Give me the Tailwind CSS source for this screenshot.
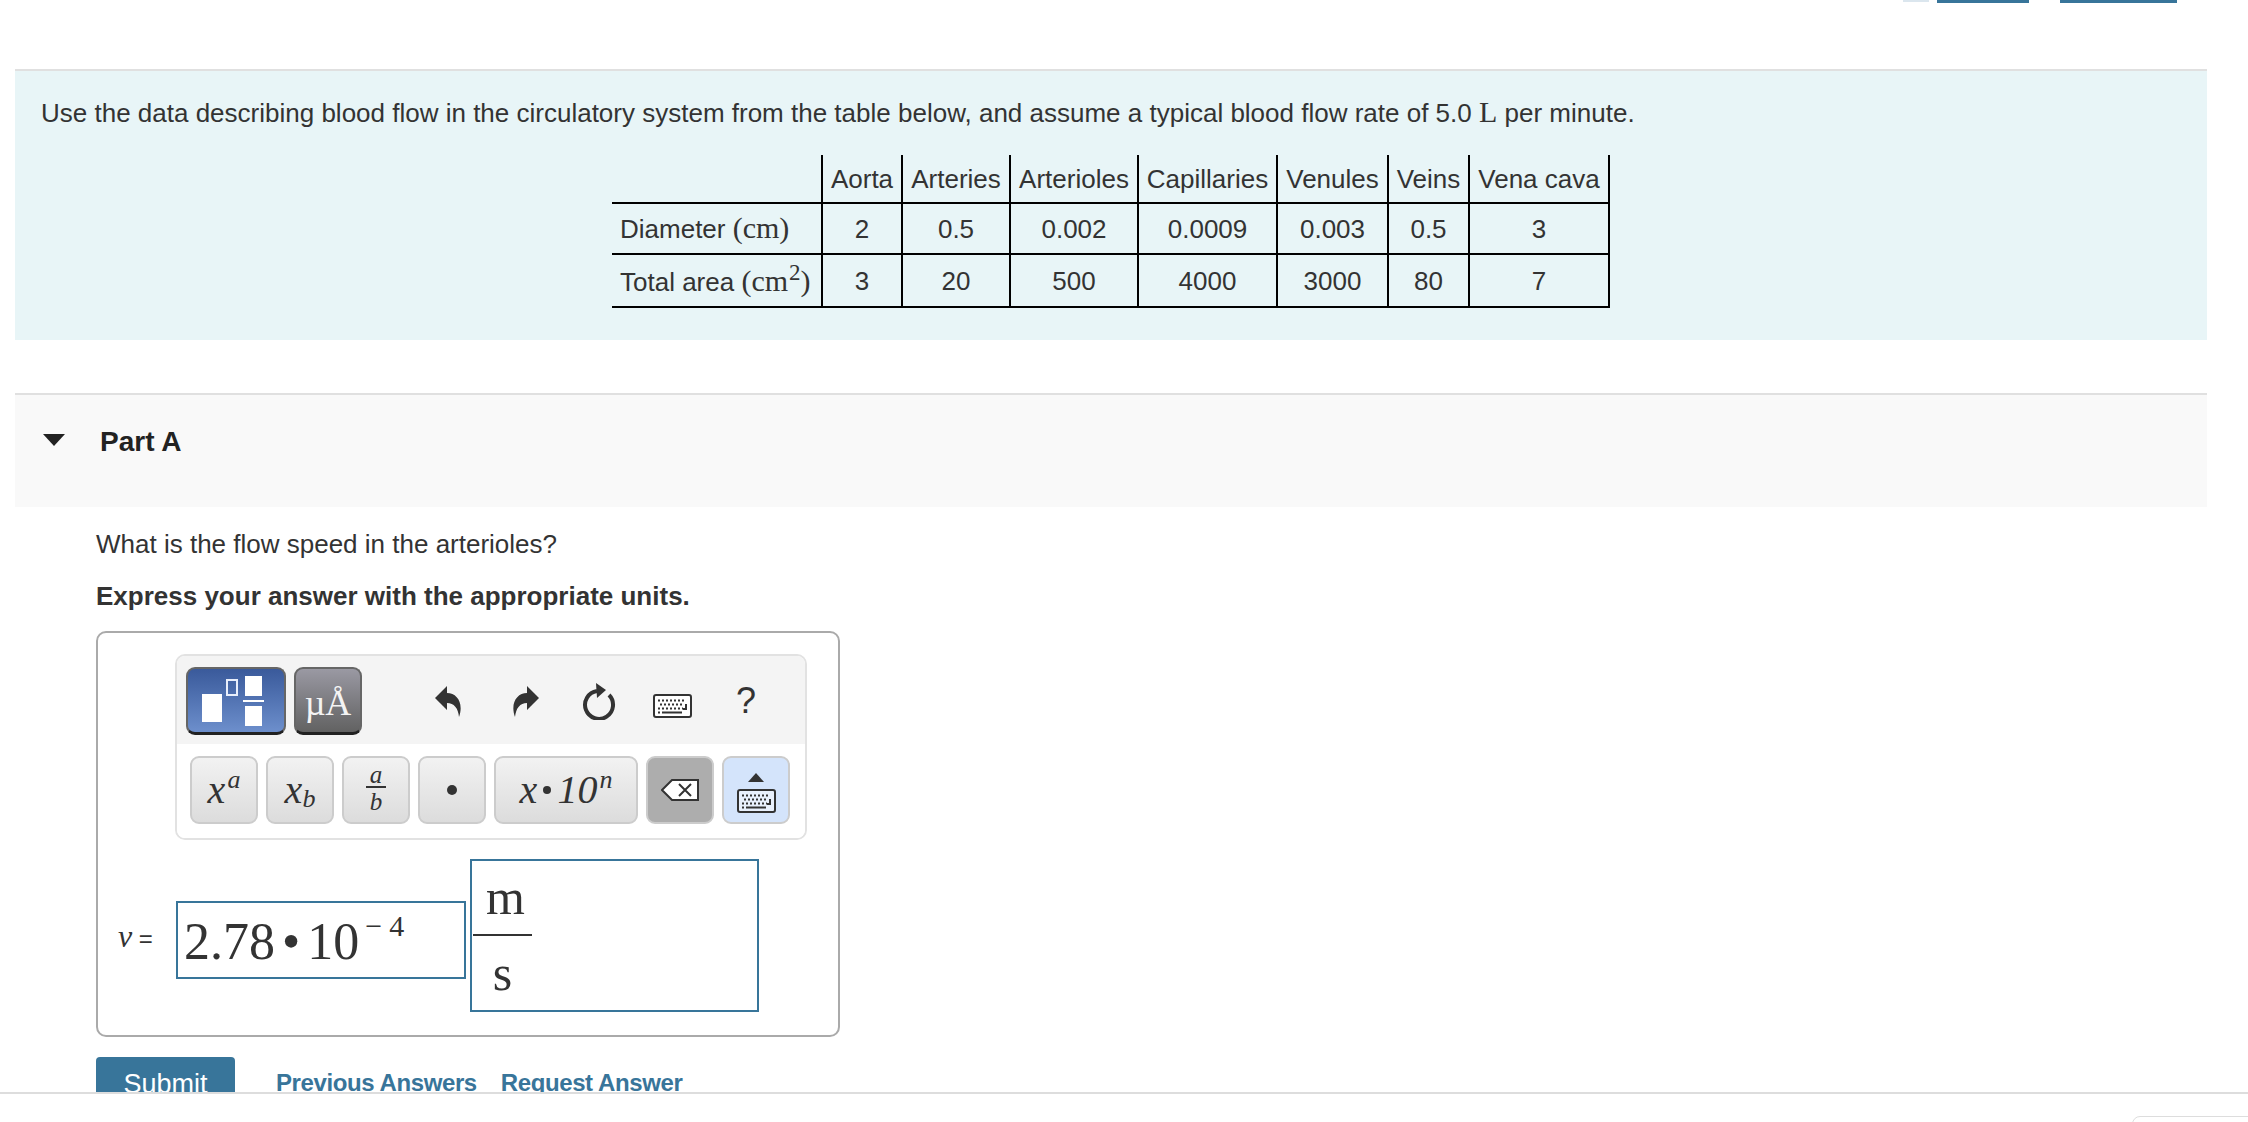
<!DOCTYPE html>
<html lang="en">
<head>
    <meta charset="UTF-8">
    <title>Part A</title>
    <script src="https://cdn.jsdelivr.net/npm/@tailwindcss/browser@4"></script>
</head>
<body class="relative h-[1122px] overflow-hidden bg-white font-['Liberation_Sans',Arial,sans-serif] text-[26px] text-[#333]">
    <!-- clipped links at the top -->
    <div class="flex h-[69px] items-start pl-[1903px]">
        <div class="h-[2px] w-[26px] bg-[#dbe6ee]"></div>
        <div class="ml-[8px] h-[3px] w-[92px] bg-[#38759a]"></div>
        <div class="ml-[31px] h-[3px] w-[117px] bg-[#38759a]"></div>
    </div>

    <!-- intro with table -->
    <section class="mx-[15px] h-[271px] w-[2192px] border-t-2 border-[#e0e0e0] bg-[#e8f5f7] pt-[21px]">
        <p class="ml-[26px] h-[63px] leading-[40px]">Use the data describing blood flow in the circulatory system from the table below, and assume a typical blood flow rate of 5.0 <span class="font-['Liberation_Serif',serif] text-[30px]">L</span> per minute.</p>
        <table class="mx-auto w-[997px] table-fixed border-collapse text-center leading-[30px]">
            <colgroup>
                <col class="w-[210px]"><col class="w-[80px]"><col class="w-[108px]"><col class="w-[128px]"><col class="w-[139px]"><col class="w-[111px]"><col class="w-[81px]"><col class="w-[140px]">
            </colgroup>
            <tr class="h-[48px]">
                <td></td>
                <td class="border-x-2 border-black">Aorta</td>
                <td class="border-x-2 border-black">Arteries</td>
                <td class="border-x-2 border-black">Arterioles</td>
                <td class="border-x-2 border-black">Capillaries</td>
                <td class="border-x-2 border-black">Venules</td>
                <td class="border-x-2 border-black">Veins</td>
                <td class="border-x-2 border-black">Vena cava</td>
            </tr>
            <tr class="h-[51px] border-t-2 border-black">
                <td class="pl-[8px] text-left">Diameter <span class="font-['Liberation_Serif',serif] text-[30px]">(cm)</span></td>
                <td class="border-x-2 border-black">2</td>
                <td class="border-x-2 border-black">0.5</td>
                <td class="border-x-2 border-black">0.002</td>
                <td class="border-x-2 border-black">0.0009</td>
                <td class="border-x-2 border-black">0.003</td>
                <td class="border-x-2 border-black">0.5</td>
                <td class="border-x-2 border-black">3</td>
            </tr>
            <tr class="h-[53px] border-y-2 border-black">
                <td class="pl-[8px] pt-[3px] text-left whitespace-nowrap">Total area <span class="font-['Liberation_Serif',serif] text-[30px]">(cm<span class="relative -top-[11px] ml-[1px] text-[23px]">2</span>)</span></td>
                <td class="border-x-2 border-black">3</td>
                <td class="border-x-2 border-black">20</td>
                <td class="border-x-2 border-black">500</td>
                <td class="border-x-2 border-black">4000</td>
                <td class="border-x-2 border-black">3000</td>
                <td class="border-x-2 border-black">80</td>
                <td class="border-x-2 border-black">7</td>
            </tr>
        </table>
    </section>

    <!-- part header -->
    <div class="mx-[15px] mt-[53px] flex h-[114px] w-[2192px] items-start border-t-2 border-[#e0e0e0] bg-[#f9f9f9] pt-[28px]">
        <svg class="ml-[28px] mt-[11px]" width="22" height="12" viewBox="0 0 22 12"><path d="M0 0H22L11 12Z" fill="#222"/></svg>
        <h2 class="ml-[35px] text-[28px] font-bold leading-[38px] text-[#222]">Part A</h2>
    </div>

    <main class="pl-[96px]">
        <p class="mt-[21px] leading-[32px]">What is the flow speed in the arterioles?</p>
        <p class="mt-[20px] font-bold leading-[32px]">Express your answer with the appropriate units.</p>

        <div class="mt-[19px] h-[406px] w-[744px] rounded-[10px] border-2 border-[#aaa] pt-[21px]">
            <!-- editor toolbar -->
            <div class="ml-[77px] h-[186px] w-[632px] overflow-hidden rounded-[10px] border-2 border-[#e2e2e2]">
                <div class="flex h-[88px] items-start bg-[#f4f4f4] pl-[9px] pt-[11px]">
                    <button class="flex h-[68px] w-[100px] items-center justify-center rounded-[9px] border-2 border-b-[3px] border-[#666] border-b-[#222] bg-linear-to-b from-[#3a5a9b] to-[#6d8fcc] pr-[6px]">
                        <svg width="62" height="50" viewBox="0 0 62 50">
                            <rect x="0" y="18" width="20" height="28" fill="#fff"/>
                            <rect x="25" y="4" width="10" height="15" fill="none" stroke="#e8eefb" stroke-width="2"/>
                            <rect x="43" y="0" width="17" height="20" fill="#fff"/>
                            <rect x="41" y="24" width="21" height="2" fill="#fff"/>
                            <rect x="43" y="30" width="17" height="20" fill="#fff"/>
                        </svg>
                    </button>
                    <button class="ml-[8px] flex h-[68px] w-[68px] items-center justify-center rounded-[9px] border-2 border-b-[3px] border-[#666] border-b-[#222] bg-linear-to-b from-[#9a99a3] to-[#626262] pt-[4px] font-['Liberation_Serif',serif] text-[36px] leading-none text-[#f4f4f4]">µÅ</button>
                    <!-- undo -->
                    <svg class="ml-[73px] mt-[19px]" width="27" height="31" viewBox="0 0 27 31"><path d="M0 12L12 0V7C22 7 29 17 24 31C23 22 19 17 12 17V24Z" fill="#333"/></svg>
                    <!-- redo -->
                    <svg class="ml-[50px] mt-[19px]" width="27" height="31" viewBox="0 0 27 31"><path d="M27 12L15 0V7C5 7 -2 17 3 31C4 22 8 17 15 17V24Z" fill="#333"/></svg>
                    <!-- reload -->
                    <svg class="ml-[43px] mt-[16px]" width="34" height="37" viewBox="0 0 34 37"><path d="M15 8A14 14 0 1 0 27 12" fill="none" stroke="#333" stroke-width="4"/><path d="M14 0L24 7L15 15Z" fill="#333"/></svg>
                    <!-- keyboard -->
                    <svg class="ml-[37px] mt-[27px]" width="39" height="24" viewBox="0 0 39 24">
                        <rect x="1" y="1" width="37" height="22" rx="2" fill="#fff" stroke="#333" stroke-width="2"/>
                        <path d="M5 6.500H33M7 10.500H31M5 14.500H30" stroke="#333" stroke-width="2" stroke-dasharray="2 2" fill="none"/>
                        <path d="M33 10V15H30M9 18.500H29M5 18.500H7" stroke="#333" stroke-width="2" fill="none"/>
                    </svg>
                    <span class="ml-[44px] mt-[16px] text-[36px] leading-[36px]">?</span>
                </div>
                <div class="flex h-[94px] gap-[8px] bg-white pl-[13px] pt-[12px] font-['Liberation_Serif',serif] italic text-[#333]">
                    <button class="flex h-[68px] w-[68px] items-center justify-center rounded-[9px] border-2 border-[#ccc] bg-linear-to-b from-[#f2f2f2] to-[#dcdcdc] text-[40px] leading-none">x<span class="relative -top-[10px] ml-[2px] text-[26px]">a</span></button>
                    <button class="flex h-[68px] w-[68px] items-center justify-center rounded-[9px] border-2 border-[#ccc] bg-linear-to-b from-[#f2f2f2] to-[#dcdcdc] text-[40px] leading-none">x<span class="relative top-[9px] text-[26px]">b</span></button>
                    <button class="flex h-[68px] w-[68px] flex-col items-center justify-center rounded-[9px] border-2 border-[#ccc] bg-linear-to-b from-[#f2f2f2] to-[#dcdcdc] pb-[4px] text-[25px] leading-[22px]"><span class="w-[20px] border-b-2 border-[#333] text-center">a</span><span class="pt-[3px]">b</span></button>
                    <button class="flex h-[68px] w-[68px] items-center justify-center rounded-[9px] border-2 border-[#ccc] bg-linear-to-b from-[#f2f2f2] to-[#dcdcdc]"><span class="h-[10px] w-[10px] rounded-full bg-[#333]"></span></button>
                    <button class="flex h-[68px] w-[144px] items-center justify-center rounded-[9px] border-2 border-[#ccc] bg-linear-to-b from-[#f2f2f2] to-[#dcdcdc] text-[40px] leading-none">x<span class="mx-[6px] h-[8px] w-[8px] rounded-full bg-[#333]"></span>10<span class="relative -top-[10px] ml-[2px] text-[26px]">n</span></button>
                    <button class="flex h-[68px] w-[68px] items-center justify-center rounded-[9px] border-2 border-[#ccc] bg-[#adadad]">
                        <svg width="38" height="22" viewBox="0 0 38 22"><path d="M1 11L11 1H37V21H11Z" fill="#fff" stroke="#333" stroke-width="2"/><path d="M18 5L30 17M30 5L18 17" stroke="#333" stroke-width="2"/></svg>
                    </button>
                    <button class="flex h-[68px] w-[68px] flex-col items-center justify-center gap-[7px] rounded-[9px] border-2 border-[#ccc] bg-[#d4e4fb] pt-[6px]">
                        <svg width="16" height="9" viewBox="0 0 16 9"><path d="M8 0L16 9H0Z" fill="#333"/></svg>
                        <svg width="39" height="24" viewBox="0 0 39 24">
                            <rect x="1" y="1" width="37" height="22" rx="2" fill="#e8f0fc" stroke="#333" stroke-width="2"/>
                            <path d="M5 6.500H33M7 10.500H31M5 14.500H30" stroke="#333" stroke-width="2" stroke-dasharray="2 2" fill="none"/>
                            <path d="M33 10V15H30M9 18.500H29M5 18.500H7" stroke="#333" stroke-width="2" fill="none"/>
                        </svg>
                    </button>
                </div>
            </div>

            <!-- answer row -->
            <div class="mt-[19px] flex items-start pl-[22px]">
                <span class="-ml-[2px] mt-[60px] w-[58px] whitespace-nowrap text-[24px] leading-[34px]"><i class="font-['Liberation_Serif',serif] text-[32px]">v</i> =</span>
                <div class="mt-[42px] h-[78px] w-[290px] border-2 border-[#38759a] pl-[6px] font-['Liberation_Serif',serif] text-[52px] leading-[78px] whitespace-nowrap [word-spacing:-6px]">2.78 • 10<span class="relative -top-[23px] ml-[6px] text-[30px]">−<span class="ml-[7px]">4</span></span></div>
                <div class="ml-[4px] h-[153px] w-[289px] border-2 border-[#38759a] font-['Liberation_Serif',serif] text-[50px]">
                    <div class="ml-[1px] flex h-[75px] w-[59px] items-center justify-center border-b-2 border-[#333] pl-[6px]">m</div>
                    <div class="ml-[1px] flex h-[74px] w-[59px] items-center justify-center">s</div>
                </div>
            </div>
        </div>

        <div class="mt-[20px] flex items-start">
            <button class="h-[50px] w-[139px] rounded-[4px] bg-[#38759a] pt-[3px] text-[27px] leading-[36px] text-white">Submit</button>
            <a class="ml-[41px] mt-[8px] text-[24px] font-bold leading-[36px] tracking-[-0.4px] text-[#38759a]">Previous Answers</a>
            <a class="ml-[24px] mt-[8px] text-[24px] font-bold leading-[36px] tracking-[-0.4px] text-[#38759a]">Request Answer</a>
        </div>
    </main>

    <!-- fixed footer covers the rest -->
    <div class="absolute inset-x-0 bottom-0 h-[30px] border-t-2 border-[#ddd] bg-white">
        <div class="absolute left-[2132px] top-[22px] h-[20px] w-[130px] rounded-tl-[8px] border border-[#ddd]"></div>
    </div>
</body>
</html>
